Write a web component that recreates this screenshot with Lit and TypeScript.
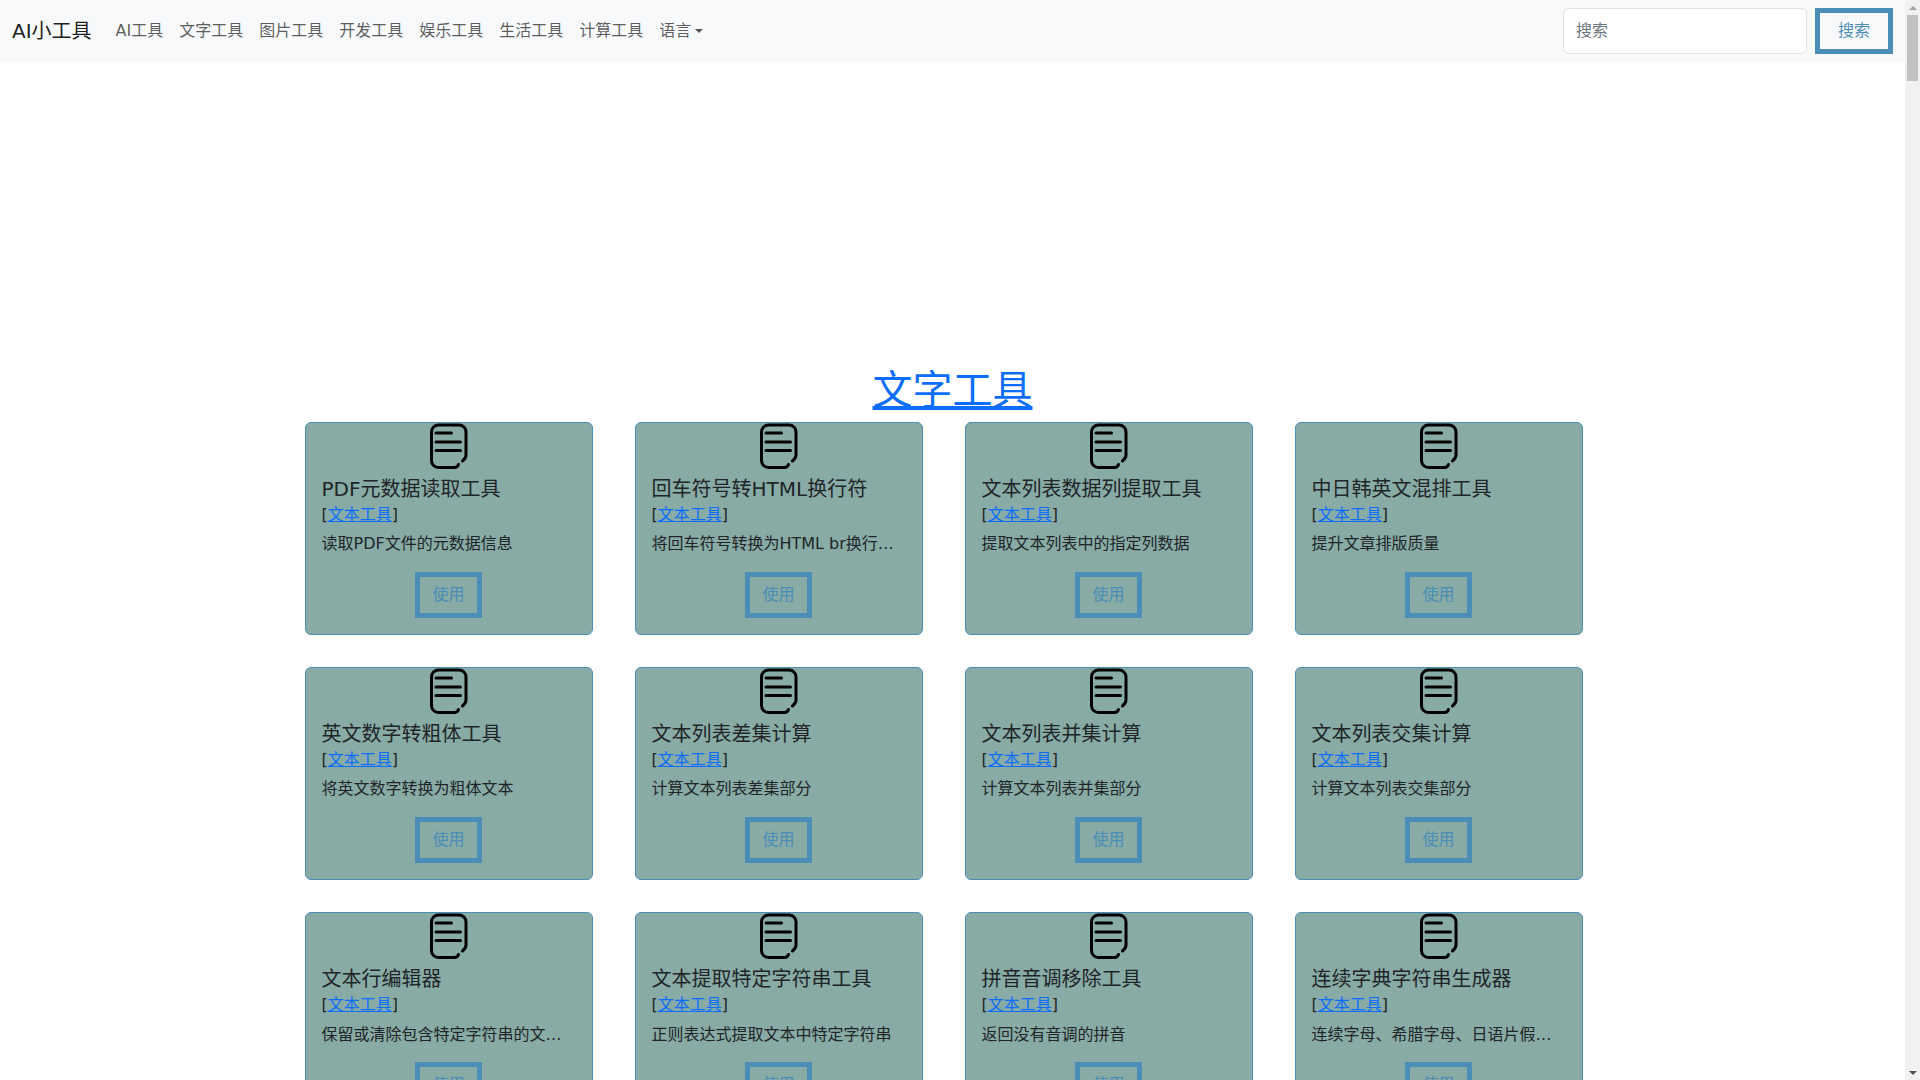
import { LitElement, html, css, svg } from "lit";
import { customElement } from "lit/decorators.js";

const TOOLS: [string, string][] = [
  ["PDF元数据读取工具", "读取PDF文件的元数据信息"],
  ["回车符号转HTML换行符", "将回车符号转换为HTML br换行标签的工具"],
  ["文本列表数据列提取工具", "提取文本列表中的指定列数据"],
  ["中日韩英文混排工具", "提升文章排版质量"],
  ["英文数字转粗体工具", "将英文数字转换为粗体文本"],
  ["文本列表差集计算", "计算文本列表差集部分"],
  ["文本列表并集计算", "计算文本列表并集部分"],
  ["文本列表交集计算", "计算文本列表交集部分"],
  ["文本行编辑器", "保留或清除包含特定字符串的文本行内容"],
  ["文本提取特定字符串工具", "正则表达式提取文本中特定字符串"],
  ["拼音音调移除工具", "返回没有音调的拼音"],
  ["连续字典字符串生成器", "连续字母、希腊字母、日语片假名等字符串生成"],
];
const NAV = ["AI工具", "文字工具", "图片工具", "开发工具", "娱乐工具", "生活工具", "计算工具"];

const icon = svg`<path d="M33.5 41.5Q32.5 44.5 29.5 44.5H13.5a7 7 0 0 1-7-7V9a7 7 0 0 1 7-7H34a7 7 0 0 1 7 7V32c0 2-1 4-3.5 6M11 10H26.5M11 19H35.5M11 27.5H35.5" fill="none" stroke="#000" stroke-width="3" stroke-linecap="round"/>`;

@customElement("app-root")
export class AppRoot extends LitElement {
  static styles = css`
    :host {
      display: flex;
      width: 100%;
      height: 100vh;
      overflow: hidden;
      font-family: "DejaVu Sans", "Noto Sans CJK SC", sans-serif;
      font-size: 16px;
      line-height: 24px;
      color: #212529;
      background: #fff;
    }
    * { box-sizing: border-box; }
    a { color: #0d6efd; text-decoration: underline; }
    .page { flex: 1; min-width: 0; overflow: hidden; }
    .navbar {
      display: flex;
      align-items: center;
      height: 62px;
      padding: 8px 12px;
      background: #f8f9fa;
    }
    .brand { font-size: 20px; color: rgba(0,0,0,.9); margin-right: 16px; line-height: 30px; }
    .nav { display: flex; flex: 1; }
    .link { padding: 8px; color: rgba(0,0,0,.65); white-space: nowrap; }
    .caret {
      display: inline-block;
      margin-left: 4px;
      vertical-align: 3px;
      border-top: 4.8px solid;
      border-left: 4.8px solid transparent;
      border-right: 4.8px solid transparent;
    }
    .search { display: flex; gap: 8px; }
    .input {
      width: 244px;
      height: 46px;
      padding: 10px 12px;
      border: 1px solid #dee2e6;
      border-radius: 6px;
      background: #fff;
      color: #6c757d;
    }
    .btn {
      border: 5px solid #4a8db7;
      color: #4a8db7;
      padding: 6px 12px;
      height: 46px;
      text-align: center;
      white-space: nowrap;
    }
    .search .btn { padding: 6px 18px; }
    .ad { height: 304px; }
    h1 {
      margin: 0 0 8px;
      font-size: 40px;
      font-weight: 400;
      line-height: 48px;
      text-align: center;
    }
    .grid {
      display: grid;
      grid-template-columns: repeat(4, 330px);
      row-gap: 32.15px;
      justify-content: center;
      padding: 0;
    }
    .col { padding: 0 12px; }
    .card {
      width: 288px;
      height: 213px;
      border: 1px solid #4a8db7;
      border-radius: 6px;
      background: #88aba5;
      display: flex;
      flex-direction: column;
    }
    .icon { display: block; width: 48px; height: 48px; margin: 0 auto; flex: none; }
    .body { padding: 6px 16px 16px; display: flex; flex-direction: column; min-height: 0; }
    .title { font-size: 20px; line-height: 24px; margin-bottom: 2px; white-space: nowrap; }
    .cat { height: 24px; }
    .desc {
      margin-top: 5.25px;
      height: 24px;
      white-space: nowrap;
      overflow: hidden;
      text-overflow: ellipsis;
    }
    .card .btn { align-self: center; margin-top: 16.75px; width: 67px; padding: 6px 0; }
    .scrollbar {
      flex: none;
      width: 15px;
      background: #f1f1f1;
      position: relative;
      display: flex;
      flex-direction: column;
      align-items: center;
    }
    .arrow { flex: none; width: 15px; height: 15px; display: flex; align-items: center; justify-content: center; }
    .arrow i { display: block; border-left: 4px solid transparent; border-right: 4px solid transparent; }
    .up i { border-bottom: 4px solid #a3a3a3; }
    .down i { border-top: 4px solid #505050; }
    .thumb { flex: none; width: 11px; height: 66px; background: #c1c1c1; }
    .track { flex: 1; }
  `;

  render() {
    return html`
      <div class="page">
        <div class="navbar">
          <div class="brand">AI小工具</div>
          <div class="nav">
            ${NAV.map((n) => html`<div class="link">${n}</div>`)}
            <div class="link">语言<span class="caret"></span></div>
          </div>
          <div class="search">
            <div class="input">搜索</div>
            <div class="btn">搜索</div>
          </div>
        </div>
        <div class="ad"></div>
        <h1><a href="#">文字工具</a></h1>
        <div class="grid">
          ${TOOLS.map(
            ([t, d]) => html`
              <div class="col">
                <div class="card">
                  <svg class="icon" viewBox="0 0 48 48">${icon}</svg>
                  <div class="body">
                    <div class="title">${t}</div>
                    <div class="cat">[<a href="#">文本工具</a>]</div>
                    <div class="desc">${d}</div>
                    <div class="btn">使用</div>
                  </div>
                </div>
              </div>
            `
          )}
        </div>
      </div>
      <div class="scrollbar">
        <div class="arrow up"><i></i></div>
        <div class="thumb"></div>
        <div class="track"></div>
        <div class="arrow down"><i></i></div>
      </div>
    `;
  }
}
